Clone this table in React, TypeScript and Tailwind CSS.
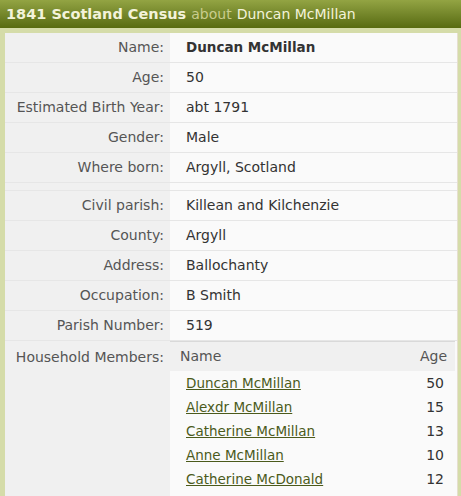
import React from "react";

const font = { fontFamily: '"DejaVu Sans", Verdana, sans-serif' };

type Row = { label: string; value: string; bold?: boolean };

const rowsA: Row[] = [
  { label: "Name:", value: "Duncan McMillan", bold: true },
  { label: "Age:", value: "50" },
  { label: "Estimated Birth Year:", value: "abt 1791" },
  { label: "Gender:", value: "Male" },
  { label: "Where born:", value: "Argyll, Scotland" },
];

const rowsB: Row[] = [
  { label: "Civil parish:", value: "Killean and Kilchenzie" },
  { label: "County:", value: "Argyll" },
  { label: "Address:", value: "Ballochanty" },
  { label: "Occupation:", value: "B Smith" },
  { label: "Parish Number:", value: "519" },
];

const members = [
  ["Duncan McMillan", "50"],
  ["Alexdr McMillan", "15"],
  ["Catherine McMillan", "13"],
  ["Anne McMillan", "10"],
  ["Catherine McDonald", "12"],
];

function DataRow({ r }: { r: Row }) {
  return (
    <div className="grid grid-cols-[165px_1fr] border-b border-[#e6e6e6] h-[30px]">
      <div className="bg-[#f0f0f0] text-right pr-[6px] text-[#555] flex items-center justify-end">
        {r.label}
      </div>
      <div
        className={`bg-[#fafafa] pl-[16px] flex items-center text-[#333] ${r.bold ? "font-bold text-[13.5px]" : ""}`}
      >
        {r.value}
      </div>
    </div>
  );
}

export default function App() {
  return (
    <div className="w-[461px] h-[496px] overflow-hidden bg-white text-[14px]" style={font}>
      <div className="h-[28px] bg-gradient-to-b from-[#93a443] to-[#586b0f] flex items-center pl-[6px] text-[14px] text-[#f3f3da] leading-none">
        <span className="font-bold text-[14.5px]">1841 Scotland Census</span>
        <span className="text-[#c9cd8d] ml-[5px]">about</span>
        <span className="ml-[5px]">Duncan McMillan</span>
      </div>
      <div className="bg-[#d5dca9] pl-[5px] pt-[5px] pr-[3px]">
        <div className="border-r border-[#e6dfcf]">
          {rowsA.map((r) => (
            <DataRow key={r.label} r={r} />
          ))}
          <div className="grid grid-cols-[165px_1fr] border-b border-[#e6e6e6] h-[8px]">
            <div className="bg-[#f0f0f0]" />
            <div className="bg-[#fafafa]" />
          </div>
          {rowsB.map((r) => (
            <DataRow key={r.label} r={r} />
          ))}
          <div className="grid grid-cols-[165px_1fr] border-b border-[#e6e6e6]">
            <div className="bg-[#f0f0f0] text-right pr-[6px] text-[#555] pt-[6px]">
              Household Members:
            </div>
            <div className="bg-[#fafafa] pr-[2px] pb-[6px]">
              <div className="flex justify-between items-center h-[30px] bg-[#f0f0f0] border-t border-[#d9d9d9] text-[#555] pl-[10px] pr-[8px]">
                <span>Name</span>
                <span>Age</span>
              </div>
              {members.map(([n, a]) => (
                <div key={n} className="flex justify-between items-center h-[24px] pl-[16px] pr-[11px] text-[#333]">
                  <a className="underline text-[#4b5a1b] text-[13.5px]" href="#">
                    {n}
                  </a>
                  <span>{a}</span>
                </div>
              ))}
            </div>
          </div>
          <div className="grid grid-cols-[165px_1fr] h-[20px]">
            <div className="bg-[#f0f0f0]" />
            <div className="bg-[#fafafa]" />
          </div>
        </div>
      </div>
    </div>
  );
}
